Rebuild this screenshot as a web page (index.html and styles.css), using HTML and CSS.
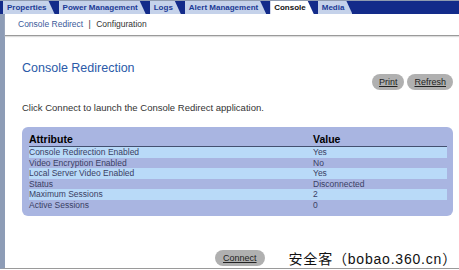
FILE: index.html
```html
<html>
<head>
  <title>Console Redirection</title>
  <link rel="stylesheet" href="styles.css">
</head>
<body>
  <div class="tabs">
    <span class="tab">Properties</span>
    <span class="tab">Power Management</span>
    <span class="tab">Logs</span>
    <span class="tab">Alert Management</span>
    <span class="tab active">Console</span>
    <span class="tab">Media</span>
  </div>
  <div class="page">
    <div class="subnav">
      <a class="sublink">Console Redirect</a>
      <span class="sep">|</span>
      <span class="subcurrent">Configuration</span>
    </div>
    <div class="content">
      <div class="title-row">
        <h1>Console Redirection</h1>
        <div class="actions">
          <a class="btn">Print</a>
          <a class="btn">Refresh</a>
        </div>
      </div>
      <p class="intro">Click Connect to launch the Console Redirect application.</p>
      <div class="panel">
        <table class="attrs">
          <tr><th>Attribute</th><th class="val">Value</th></tr>
          <tr><td>Console Redirection Enabled</td><td>Yes</td></tr>
          <tr><td>Video Encryption Enabled</td><td>No</td></tr>
          <tr><td>Local Server Video Enabled</td><td>Yes</td></tr>
          <tr><td>Status</td><td>Disconnected</td></tr>
          <tr><td>Maximum Sessions</td><td>2</td></tr>
          <tr><td>Active Sessions</td><td>0</td></tr>
        </table>
      </div>
      <div class="footer">
        <a class="btn connect">Connect</a>
        <span class="mark">安全客（bobao.360.cn）</span>
      </div>
    </div>
  </div>
</body>
</html>
```

FILE: styles.css
```css
body {
  margin: 0;
  font-family: "Liberation Sans", Arial, sans-serif;
  background: #fff;
  width: 459px;
  height: 270px;
  overflow: hidden;
}

.tabs {
  display: flex;
  gap: 4px;
  height: 13px;
  padding-left: 3px;
  border-top: 1px solid #8f9bb0;
  background-color: #132b8a;
}

.tab {
  display: block;
  padding: 0 8px 0 4px;
  background-color: #c5d2ea;
  color: #1b3a96;
  font-weight: bold;
  font-size: 8px;
  line-height: 13px;
  clip-path: polygon(0 0, calc(100% - 6px) 0, 100% 100%, 0 100%);
}

.tab.active {
  background-color: #fff;
  color: #111;
}

.page {
  border-left: 5px solid #8d9cb6;
  height: 254px;
  border-bottom: 1px solid #9a9a9a;
}

.subnav {
  height: 21px;
  padding-left: 13px;
  font-size: 8.5px;
  line-height: 21px;
  border-bottom: 1px solid #9a9a9a;
  box-shadow: 0 1px 1px #ddd;
}

.sublink {
  color: #3a5a9a;
}

.sep {
  color: #333;
  margin: 0 3px;
}

.subcurrent {
  color: #333;
}

.content {
  padding: 0 6px 0 17px;
}

.title-row {
  display: flex;
  justify-content: space-between;
  align-items: flex-start;
  padding-top: 24px;
}

h1 {
  margin: 0;
  font-size: 12.5px;
  font-weight: normal;
  color: #2a5aa8;
  line-height: 16px;
}

.actions {
  display: flex;
  gap: 3px;
  margin-top: 14px;
}

.btn {
  display: block;
  background-color: #b0b0b0;
  border-radius: 8px;
  padding: 0 7px;
  font-size: 9px;
  line-height: 16px;
  color: #222;
  text-decoration: underline;
}

.intro {
  margin: 12px 0 0;
  font-size: 9.5px;
  color: #333;
}

.panel {
  margin-top: 14px;
  background-color: #a9b5e1;
  border-radius: 6px;
  padding: 4px 6px 6px 7px;
}

.attrs {
  width: 100%;
  border-collapse: collapse;
}

.attrs th {
  text-align: left;
  font-size: 10.5px;
  color: #000;
  padding: 2px 0 1px;
  border-bottom: 1px solid #445070;
}

.attrs th.val {
  width: 134px;
}

.attrs td {
  font-size: 8.5px;
  line-height: 10.5px;
  padding: 0;
  color: #3a4064;
}

.attrs tr:nth-child(even) td {
  background-color: #b9daf8;
}

.footer {
  display: flex;
  align-items: center;
  margin-top: 32px;
  padding-left: 193px;
}

.connect {
  padding: 0 8px;
}

.mark {
  margin-left: 24px;
  font-size: 14px;
  letter-spacing: 0.8px;
  color: #111;
  font-family: "Liberation Sans", "Noto Sans CJK SC", sans-serif;
}
```
